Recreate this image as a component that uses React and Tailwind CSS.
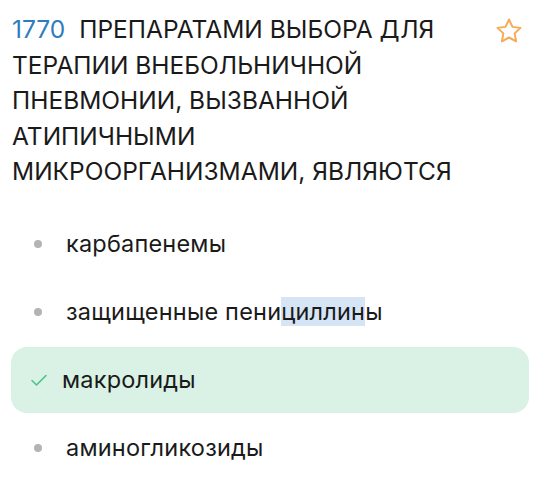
import * as React from 'react';

const options = [
  { text: 'карбапенемы' },
  { text: 'защищенные пени', mark: 'циллин', tail: 'ы' },
  { text: 'макролиды', correct: true },
  { text: 'аминогликозиды' },
];

function Star() {
  return (
    <svg width="30" height="30" viewBox="0 0 24 24" fill="none" stroke="#f6ab58" strokeWidth="1.6" strokeLinejoin="round">
      <path d="M12 2.8l2.8 5.9 6.4.8-4.7 4.4 1.2 6.4L12 17.2l-5.7 3.1 1.2-6.4-4.7-4.4 6.4-.8z" />
    </svg>
  );
}

function Check() {
  return (
    <svg width="18" height="14" viewBox="0 0 18 14" fill="none" stroke="#4cc38a" strokeWidth="1.6" strokeLinecap="round" strokeLinejoin="round">
      <path d="M2 7.5l4.5 4.5L16 2.5" />
    </svg>
  );
}

export default function App() {
  return (
    <div className="w-[540px] h-[484px] bg-white overflow-hidden text-[#1a1a1a]" style={{ fontFamily: 'Inter, "Noto Sans", sans-serif' }}>
      {/* question header */}
      <div className="flex items-start justify-between pl-3 pr-[16px] pt-[12px]">
        <p className="w-[458px] text-[24.5px] leading-[35.5px]">
          <span className="text-[#2e7cc0] mr-[14px]">1770</span>
          ПРЕПАРАТАМИ ВЫБОРА ДЛЯ ТЕРАПИИ ВНЕБОЛЬНИЧНОЙ ПНЕВМОНИИ, ВЫЗВАННОЙ АТИПИЧНЫМИ МИКРООРГАНИЗМАМИ, ЯВЛЯЮТСЯ
        </p>
        <div className="mt-[4px]">
          <Star />
        </div>
      </div>

      {/* answers */}
      <ul className="mt-[21px] flex flex-col gap-[2px] px-[11px]">
        {options.map((o, i) => (
          <li
            key={i}
            className={
              o.correct
                ? 'flex items-center h-[66px] rounded-[16px] bg-[#d9f2e5] pl-[19px]'
                : 'flex items-center h-[66px] pl-[22px]'
            }
          >
            {o.correct ? (
              <span className="w-[18px] flex justify-center mr-[14px]"><Check /></span>
            ) : (
              <span className="w-[8px] h-[8px] rounded-full bg-[#b4b4b4] ml-[1px] mr-[24px]" />
            )}
            <span className="text-[23.5px] leading-[30px] tracking-[0.2px] text-[#1a1a1a]">
              {o.text}
              {o.mark && <span className="bg-[#d5e5f6]">{o.mark}</span>}
              {o.tail}
            </span>
          </li>
        ))}
      </ul>
    </div>
  );
}
